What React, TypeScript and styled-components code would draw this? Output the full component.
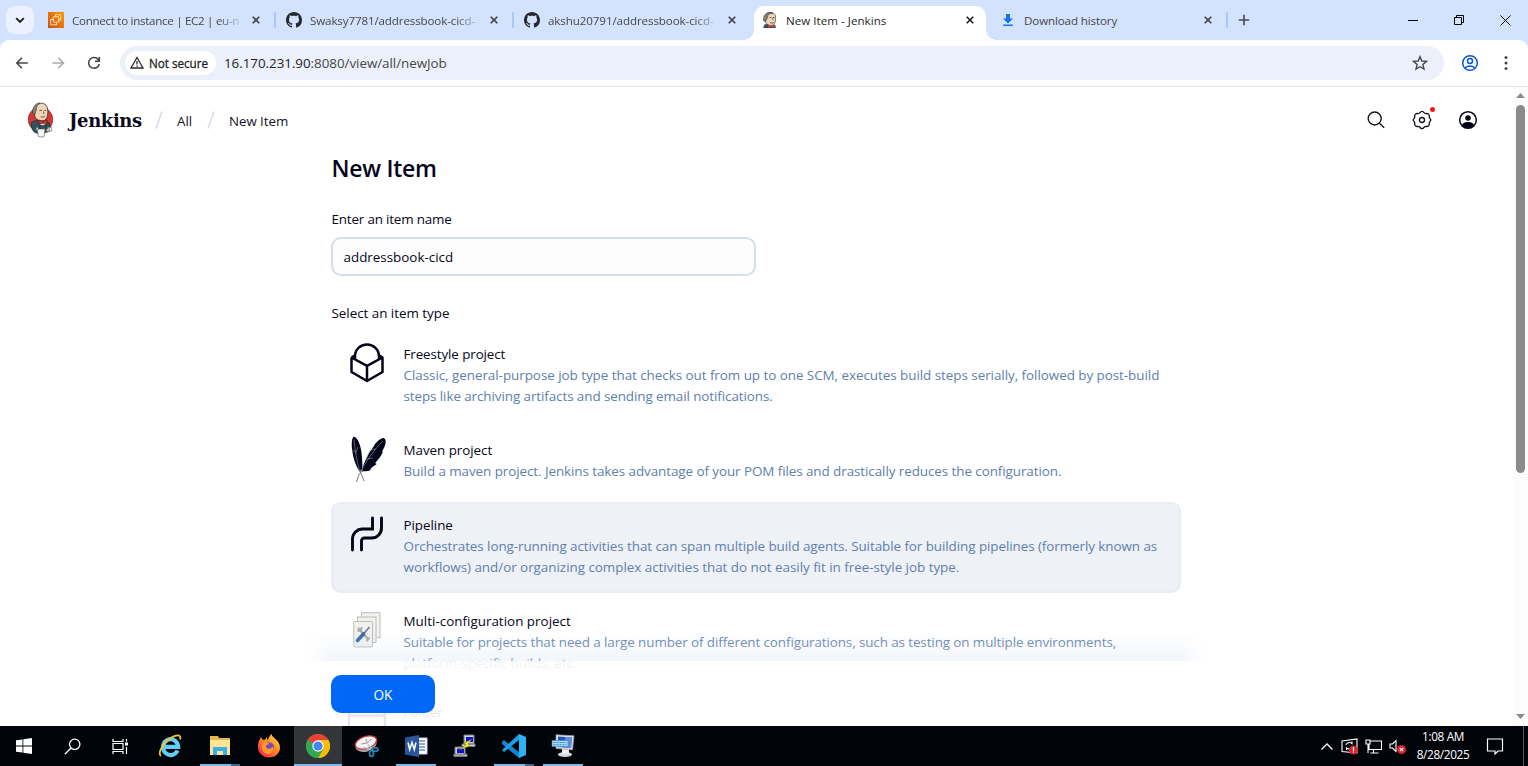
import React from "react";
import styled, { createGlobalStyle, css } from "styled-components";

const Global = createGlobalStyle`
  *{box-sizing:border-box}
  body{margin:0;background:#fff;overflow:hidden;font-family:"Open Sans","Noto Sans",sans-serif}
  svg{display:block;flex:none}
`;
const Screen = styled.div`width:1528px;height:766px;display:flex;flex-direction:column;background:#fff;overflow:hidden;`;

/* ---- tab strip ---- */
const Strip = styled.div`height:40px;background:#d3e2fd;display:flex;align-items:flex-start;padding-left:6px;flex:none;`;
const TabMenu = styled.div`width:28px;height:28px;margin-top:6px;border-radius:9px;background:#ebf1fe;display:grid;place-items:center;`;
const Tab = styled.div<{ $active?: boolean; $w: number; $pad: number; $gap?: number }>`
  width:${p => p.$w}px;height:34px;margin:6px 0 0 ${p => p.$gap ?? 0}px;padding:6px ${p => (p.$active ? 8 : 10)}px 0 ${p => p.$pad}px;display:flex;align-items:flex-start;gap:8px;position:relative;
  ${p => p.$active && css`background:#fff;border-radius:10px 10px 0 0;
    &::before,&::after{content:"";position:absolute;bottom:0;width:10px;height:10px;}
    &::before{left:-10px;background:radial-gradient(circle at 0 0,transparent 9.5px,#fff 10px);}
    &::after{right:-10px;background:radial-gradient(circle at 100% 0,transparent 9.5px,#fff 10px);}`}
`;
const TabTitle = styled.div<{ $fade?: boolean; $ls: number; $dark?: boolean }>`
  flex:1;min-width:0;height:17px;line-height:17px;font-size:11.6px;color:${p => p.$dark ? "#1f1f1f" : "#474747"};white-space:nowrap;letter-spacing:${p => p.$ls}px;
  ${p => p.$fade && css`mask-image:linear-gradient(90deg,#000 87%,rgba(0,0,0,.15));`}
`;
const CloseBox = styled.div`width:16px;height:16px;display:grid;place-items:center;`;
const Divider = styled.div`width:2px;height:16px;margin-top:12px;background:#a8c7fa;border-radius:1px;`;
const NewTab = styled.div`margin:14px 0 0 10px;`;
const WinControls = styled.div`margin-left:auto;display:flex;`;
const WinButton = styled.div`width:46px;height:40px;display:grid;place-items:center;`;

/* ---- toolbar ---- */
const ToolbarBack = styled.div`background:#d3e2fd;height:47px;flex:none;`;
const Toolbar = styled.div`height:47px;background:#fff;border-radius:9px 9px 0 0;border-bottom:1px solid #e0e2e6;display:flex;align-items:center;padding:0 14px 1px;`;
const NavIcons = styled.div`display:flex;gap:20px;margin-right:18px;`;
const Omnibox = styled.div`width:1324px;height:34px;border-radius:17px;background:#ebf0fa;display:flex;align-items:center;padding:0 16px 0 5px;`;
const Chip = styled.div`width:91px;height:24px;border-radius:12px;background:#fff;display:flex;align-items:center;padding-left:5px;gap:5px;font-size:11.7px;font-weight:500;color:#1f1f1f;white-space:nowrap;letter-spacing:-.02px;-webkit-text-stroke:.3px #1f1f1f;`;
const Url = styled.div`margin-left:8px;flex:1;font-size:13.4px;color:#474747;letter-spacing:-.04px;b{font-weight:400;color:#1f1f1f}`;
const ToolEnd = styled.div`display:flex;align-items:center;gap:19px;margin-left:17px;`;

/* ---- page ---- */
const Viewport = styled.div`flex:1;min-height:0;display:flex;position:relative;background:#fff;`;
const Page = styled.div`flex:1;height:639px;overflow:hidden;position:relative;`;
const Header = styled.header`height:65px;margin-bottom:2px;display:flex;align-items:center;padding:0 35px 0 26px;`;
const Brand = styled.div`font:bold 18px/24px "DejaVu Serif","Liberation Serif",serif;color:#0a0a1a;margin-left:15px;width:73px;letter-spacing:-.4px;white-space:nowrap;padding-top:2px;`;
const Crumb = styled.div<{ $w: number }>`font-size:13.3px;color:#14141f;width:${p => p.$w}px;white-space:nowrap;letter-spacing:-.03px;padding-top:2px;`;
const Slash = styled.div<{ $l: number; $r: number }>`margin:0 ${p => p.$r}px 0 ${p => p.$l}px;`;
const HeadIcons = styled.div`margin-left:auto;display:flex;gap:26px;align-items:center;`;
const GearWrap = styled.div`position:relative;`;
const Dot = styled.i`position:absolute;width:5px;height:5px;border-radius:50%;background:#fa1414;right:-3px;top:-3px;`;
const Main = styled.main`width:850px;margin-left:331px;`;
const Title = styled.h1`margin:0;height:28px;font-weight:600;font-size:23px;line-height:28px;color:#06061a;letter-spacing:-.25px;padding-left:.5px;`;
const Label = styled.div<{ $top: number; $ls: number }>`margin-top:${p => p.$top}px;height:20px;padding-left:.5px;font-size:13.4px;line-height:20px;color:#06061a;letter-spacing:${p => p.$ls}px;`;
const Field = styled.div`margin-top:8px;width:425px;height:39px;border:2px solid #d5dfe9;border-radius:10px;background:#fdfdfd;padding:0 10.5px;font-size:13.4px;line-height:36px;color:#06061a;`;
const Items = styled.div`margin-top:8px;display:flex;flex-direction:column;`;
const Item = styled.div<{ $sel?: boolean; $h: number }>`
  height:${p => p.$h}px;margin-bottom:5px;display:flex;padding:12px 0 0 12px;border-radius:10px;
  ${p => p.$sel && css`background:#eef1f6;box-shadow:inset 0 0 0 2px #e9edf4;`}
`;
const IconBox = styled.div<{ $up?: number; $left?: number }>`width:48px;height:48px;margin:${p => -(p.$up ?? 0)}px 12.5px 0 0;padding-left:${p => p.$left ?? 0}px;display:flex;align-items:flex-start;justify-content:center;`;
const ItemText = styled.div`padding-top:1px;`;
const ItemName = styled.div<{ $ls?: number }>`font-size:13.4px;line-height:21px;color:#06061a;letter-spacing:${p => p.$ls ?? -0.04}px;`;
const Line = styled.div<{ $ls: number }>`font-size:13.45px;line-height:21px;color:#6080ad;white-space:nowrap;letter-spacing:${p => p.$ls + 0.06}px;`;
const Footer = styled.div`position:absolute;left:331px;bottom:0;width:850px;height:65px;padding-top:14px;background:rgba(255,255,255,.9);`;
const FooterGlow = styled.div`position:absolute;left:306px;width:900px;bottom:65px;height:30px;background:linear-gradient(rgba(225,232,244,0),rgba(225,232,244,.4));mask-image:linear-gradient(90deg,transparent,#000 25px,#000 875px,transparent);`;
const Ok = styled.button`border:0;width:104px;height:38px;border-radius:10px;background:#0068f8;color:#fff;font:13.6px "Open Sans",sans-serif;display:block;padding:1px 0 0;`;
const Scroll = styled.div`width:15px;background:#fcfcfc;display:flex;flex-direction:column;align-items:center;justify-content:space-between;padding:6px 0 7px;`;
const Thumb = styled.div`width:9px;height:368px;background:#8b8b8b;border-radius:5px;margin:7px 0 auto;`;

/* ---- taskbar ---- */
const Taskbar = styled.div`height:40px;background:#010409;display:flex;flex:none;`;
const TaskButton = styled.div<{ $w: number; $gap?: number; $active?: boolean; $open?: boolean; $stack?: boolean }>`
  width:${p => p.$w}px;height:40px;margin-left:${p => p.$gap ?? 0}px;display:grid;place-items:center;position:relative;background:${p => p.$active ? "#333539" : "transparent"};
  &::after{content:"";display:${p => p.$open || p.$active ? "block" : "none"};position:absolute;bottom:0;left:${p => p.$active ? 0 : 4}px;right:${p => p.$active ? 0 : 4}px;height:2px;
    background:${p => p.$stack ? "linear-gradient(90deg,#76b9ed 31px,#416888 31px)" : "#76b9ed"};}
`;
const Tray = styled.div`margin-left:auto;display:flex;align-items:center;gap:7px;`;
const Clock = styled.div`width:58px;text-align:center;color:#fff;font-size:11.8px;line-height:18px;letter-spacing:-.35px;white-space:nowrap;margin:0 7px 0 1px;padding-bottom:2px;`;
const DesktopEdge = styled.div`width:5px;height:40px;border-left:1px solid #55585c;margin-left:12px;`;

const X = ({ c = "#3c4043" }: { c?: string }) => <svg width="8" height="8" viewBox="0 0 8 8"><path d="M.7.7l6.6 6.6M7.3.7L.7 7.3" stroke={c} strokeWidth="1.6" /></svg>;
const GitHub = () => <svg width="16" height="16" viewBox="0 0 16 16"><path fill="#24292f" d="M8 0C3.58 0 0 3.58 0 8c0 3.54 2.29 6.53 5.47 7.59.4.07.55-.17.55-.38 0-.19-.01-.82-.01-1.49-2.01.37-2.53-.49-2.69-.94-.09-.23-.48-.94-.82-1.13-.28-.15-.68-.52-.01-.53.63-.01 1.08.58 1.23.82.72 1.21 1.87.87 2.33.66.07-.52.28-.87.51-1.07-1.78-.2-3.64-.89-3.64-3.95 0-.87.31-1.59.82-2.15-.08-.2-.36-1.02.08-2.12 0 0 .67-.21 2.2.82.64-.18 1.32-.27 2-.27s1.36.09 2 .27c1.53-1.04 2.2-.82 2.2-.82.44 1.1.16 1.92.08 2.12.51.56.82 1.27.82 2.15 0 3.07-1.87 3.75-3.65 3.95.29.25.54.73.54 1.48 0 1.07-.01 1.93-.01 2.2 0 .21.15.46.55.38A8.01 8.01 0 0 0 16 8c0-4.42-3.58-8-8-8z" /></svg>;
const Ec2 = () => <svg width="16" height="16" viewBox="0 0 16 16"><defs><linearGradient id="ec" x1="0" y1="1" x2="1" y2="0"><stop stopColor="#c8511b" /><stop offset="1" stopColor="#f90" /></linearGradient></defs><path fill="url(#ec)" d="M0 0h16v16H0z" /><g fill="none" stroke="#ffe9d2" strokeWidth=".9"><path d="M7.500 4.500V2.700h5.300V8H11" /><rect x="5.300" y="4.700" width="5.500" height="5.500" rx=".6" /><path d="M5 7.500H2.700v5.300H8.500v-2.500" /></g></svg>;
const JenkinsFace = () => <svg width="16" height="16" viewBox="0 0 16 16"><path fill="#f0d6b7" stroke="#4b4540" strokeWidth=".7" d="M3.500 6C3 2 5.500.5 8.500.5c3.500 0 5.300 2 5.100 6-.1 4-1.100 6.500-3.600 7L5 13 3 9z" /><path fill="#858079" stroke="#3d3935" strokeWidth=".6" d="M1.800 9C.8 6 2.500 1.500 6.500.6c2-.4 3.500 0 4.500.8-3 0-5 .6-5.200 2.600-.2 1.300-.5 2-1.800 5z" /><path fill="#335061" d="M1 16l1.500-3.500L5 12l5 2.500 3-2 1 3.500z" /><path fill="#d33833" d="M6 13l3 1 3-1.500V16l-3-1.200L6 16z" /><path d="M7.500 5.500h2M11 5.500h1.700M8 10.500q2 1.200 4 .2M10.500 6l.5 2" fill="none" stroke="#4b4540" strokeWidth=".8" /></svg>;
const JenkinsLogo = () => (
  <svg width="28" height="36" viewBox="0 0 28 36">
    <ellipse cx="14.500" cy="17.500" rx="12.300" ry="12.500" fill="#d33833" stroke="#7a1f1b" strokeWidth=".6" />
    <path fill="#335061" stroke="#192c38" strokeWidth=".7" d="M5.500 20.500c2-1.500 4-2 6-1.700L16 21l4.500-2.200c2.500 1 3.700 3 3.700 6.700 0 2-1 3.500-2.700 4.500L14 32l-5-1.500c-2-1-3-3.500-3.500-6z" />
    <path fill="#f0d6b7" stroke="#3b332d" strokeWidth=".8" d="M8.500 8.500C9 3.500 11.500 1.200 15 1.200c4.500 0 6.800 3 6.800 8.300 0 4.800-1.300 9-4.800 9.200-4.500.3-7.600-1.700-8.300-5.200z" />
    <path fill="#858079" stroke="#3b332d" strokeWidth=".6" d="M7 11.500C5.800 6.500 8.500 2.200 12.500 1.200c1-.2 1.500 0 1.500.4-2.300 1-3.400 2.400-3.500 4.400 0 1.300.2 2-.8 3l-.9 4C7.900 13 7.300 12.700 7 11.500z" />
    <path fill="none" stroke="#3b332d" strokeWidth=".8" d="M13.500 8.600l2.500-.4M18.300 8.400h2M17.300 9.400l.7 2.500M14.800 14.800q2.200 1 4-.5" />
    <path fill="#fff" stroke="#3b332d" strokeWidth=".4" d="M14 20.500l3 1 3-1.500v7h-6z" />
    <path fill="#d33833" stroke="#5b100d" strokeWidth=".6" d="M13 18l4 1.700 3.800-2 .4 4.300-4.200-1-4 1.500z" />
    <path fill="#335061" stroke="#192c38" strokeWidth=".6" d="M14 23l2 .5 4-1v4l-6 .5z" />
    <path fill="#f5f6f7" stroke="#555" strokeWidth=".6" d="M11.300 27h7.700l-1 7.500q-3 1.200-5.700 0zM21.500 25.500l4-.3.300 3.600-3.600 1z" />
    <path fill="#f0d6b7" stroke="#3b332d" strokeWidth=".4" d="M20.500 27l3-.3v2.300l-3 .8zM10 26l2-1 .5 3-2 .6z" />
  </svg>
);
const SlashIcon = () => <svg width="8" height="18" viewBox="0 0 8 18"><path d="M7 .5L1 17.500" stroke="#d3dbe8" strokeWidth="1.500" /></svg>;
const BoxIcon = () => <svg width="36" height="42" viewBox="0 0 36 42" fill="none" stroke="#05051a" strokeWidth="2.500" strokeLinejoin="round"><path d="M6 16.500V14a12 11.500 0 0 1 24 0v2.500M2.500 15.500l15.500 8.300 15.500-8.300M2.500 15.500v14.500L18 39l15.500-9V15.500l-3.500-2.200M2.500 15.500L6 13.300M18 23.800V39" /></svg>;
const Feathers = () => (
  <svg width="38" height="46" viewBox="0 0 38 46">
    <path fill="#05051a" d="M3.500.8C1.500 3 1.500 9 2.300 15c.8 6.500 3 14 7.200 20.500l3-3C12.300 24 12 15 9.500 8 8 3 5 .2 3.500.8z" /><path fill="#05051a" d="M34.500 2.500c2.500 2 .8 8-2.500 13l1 .3c-2 5-6 9-7.800 11.200l1.500 1c-2.500 2-4.200 2.600-5.700 4.500l-1.500 2.300c-3 .5-5.500.5-7.500.6C12.500 28 19 17 23.500 10.500 27 5 32 .8 34.500 2.500z" />
    <path fill="none" stroke="#9a9aa6" strokeWidth=".6" d="M4 4c1 11 3 22 6 32M33 5C24 14 15 26 11 36M2.500 14l4 3M8 11l-2 5M17 21l3-7 6-1M16 23l7-1" /><path fill="none" stroke="#55555f" strokeWidth=".8" d="M10 35l4 10M12.500 33Q8 39 6.500 46" />
  </svg>
);
const Pipeline = () => <svg width="34" height="38" viewBox="0 -2 34 38" fill="none" stroke="#05051a" strokeWidth="2.900" strokeLinecap="round"><path d="M22.500 2v11H12.500A10 10 0 0 0 2.500 23v11M31.500 2v9.500a10 10 0 0 1-10 10.500H14.500a3 3 0 0 0-3 3v9" /></svg>;
const Matrix = () => (
  <svg width="28" height="38" viewBox="0 -2 28 38"><g fill="#f1f1ef" stroke="#bcbcb8" strokeWidth="1"><rect x="8.500" y=".7" width="18.500" height="25" /><rect x="4.500" y="5" width="18.500" height="25.500" /><rect x=".8" y="9.500" width="18.700" height="25.500" rx="1" /></g>
    <path d="M5 16l11 12M4.500 18.500a3 3 0 0 0 4-3.500M14 29.500a3 3 0 0 1 2.800-3.600" fill="none" stroke="#a7a9aa" strokeWidth="2" /><path d="M16.500 15l-6 7" stroke="#64758a" strokeWidth="1.500" /><path d="M10.500 22l-6 6.500" stroke="#3465a4" strokeWidth="3.600" strokeLinecap="round" /></svg>
);
const FolderIcon = () => <svg width="40" height="34" viewBox="0 0 40 34" fill="none" stroke="#05051a" strokeWidth="2.500"><path d="M2 34V7h36v27M2 14.500h36" /></svg>;

const TrayIcon = ({ kind }: { kind: "update" | "net" | "sound" }) => (
  <svg width="17" height="18" viewBox="0 0 17 18" fill="none" stroke="#fff" strokeWidth="1.100">
    {kind === "update" && <><path d="M1 4l15-2v14L1 14.500zM5 8a3.500 3 0 0 1 6-1.500V4.500M11.500 9.500a3.500 3 0 0 1-6 1.500v2" /><circle cx="12.500" cy="13" r="4.500" fill="#d9232e" stroke="none" /><path d="M12.500 10.200v3.500M12.500 14.500v1.200" strokeWidth="1.300" /></>}
    {kind === "net" && <><path d="M5 4h11.500v8.500H4V7M1 3h4v4H1zM8.500 13v3M5.500 16h8M3 7v9" /></>}
    {kind === "sound" && <><path d="M1 7h2.500L7 3.500v11L3.500 11H1z" /><circle cx="12.500" cy="12.500" r="4.500" fill="#d9232e" stroke="none" /><path d="M10.800 10.800l3.400 3.400M14.200 10.800l-3.400 3.400" /></>}
  </svg>
);

const CloseButton = ({ c }: { c?: string }) => <CloseBox><X c={c} /></CloseBox>;

type Entry = { name: string; icon: React.ReactNode; h: number; up?: number; left?: number; sel?: boolean; nameLs?: number; lines: [string, number][] };
const entries: Entry[] = [
  { name: "Freestyle project", icon: <BoxIcon />, h: 91, up: 1, nameLs: -0.1, lines: [["Classic, general-purpose job type that checks out from up to one SCM, executes build steps serially, followed by post-build", -0.11], ["steps like archiving artifacts and sending email notifications.", -0.15]] },
  { name: "Maven project", icon: <Feathers />, h: 70, up: 3, left: 3, lines: [["Build a maven project. Jenkins takes advantage of your POM files and drastically reduces the configuration.", -0.14]] },
  { name: "Pipeline", icon: <Pipeline />, h: 91, sel: true, lines: [["Orchestrates long-running activities that can span multiple build agents. Suitable for building pipelines (formerly known as", -0.135], ["workflows) and/or organizing complex activities that do not easily fit in free-style job type.", -0.095]] },
  { name: "Multi-configuration project", icon: <Matrix />, h: 86, nameLs: 0.02, lines: [["Suitable for projects that need a large number of different configurations, such as testing on multiple environments,", -0.165], ["platform-specific builds, etc.", -0.16]] },
  { name: "Folder", icon: <FolderIcon />, h: 91, lines: [] },
];

export default function App() {
  return (
    <Screen>
      <Global />
      <Strip>
        <TabMenu><svg width="10" height="7" viewBox="0 0 10 7"><path d="M1.200 1.200L5 5l3.800-3.800" fill="none" stroke="#1f1f1f" strokeWidth="1.900" /></svg></TabMenu>
        <Tab $w={240} $pad={14}><Ec2 /><TabTitle $fade $ls={-0.3}>Connect to instance | EC2 | eu-n</TabTitle><CloseButton /></Tab>
        <Divider />
        <Tab $w={236} $pad={10}><GitHub /><TabTitle $fade $ls={-0.13}>Swaksy7781/addressbook-cicd-</TabTitle><CloseButton /></Tab>
        <Divider />
        <Tab $w={236} $pad={10}><GitHub /><TabTitle $fade $ls={-0.1}>akshu20791/addressbook-cicd-</TabTitle><CloseButton /></Tab>
        <Tab $w={232} $pad={8} $gap={4} $active><JenkinsFace /><TabTitle $dark $ls={0.02}>New Item - Jenkins</TabTitle><CloseButton c="#1f1f1f" /></Tab>
        <Tab $w={240} $pad={14}><svg width="16" height="16" viewBox="0 0 16 16"><path fill="#1a73e8" d="M6 2h4v4.500h3L8 11.500l-5-5h3zM3 12.500h10V14H3z" /></svg><TabTitle $ls={-0.13}>Download history</TabTitle><CloseButton /></Tab>
        <Divider />
        <NewTab><svg width="12" height="12" viewBox="0 0 12 12"><path d="M6 .8v10.400M.8 6h10.400" stroke="#474747" strokeWidth="1.600" /></svg></NewTab>
        <WinControls>
          <WinButton><svg width="10" height="10" viewBox="0 0 10 10"><path d="M0 5.500h10" stroke="#000" /></svg></WinButton>
          <WinButton><svg width="10" height="10" viewBox="0 0 10 10" fill="none" stroke="#000"><path d="M.5 2.500h7v7h-7zM2.500 2V.5h7v7H8" /></svg></WinButton>
          <WinButton><svg width="11" height="11" viewBox="0 0 11 11"><path d="M.5.5l10 10M10.500.5l-10 10" stroke="#000" /></svg></WinButton>
        </WinControls>
      </Strip>
      <ToolbarBack>
        <Toolbar>
          <NavIcons>
            {["#474747", "#a9abae"].map((c, i) => <svg key={c} width="16" height="16" viewBox="0 0 16 16" fill="none" stroke={c} strokeWidth="1.600"><path d={i ? "M2.500 8h11M8.300 2.800L13.500 8l-5.200 5.200" : "M13.800 8H2.800M8 2.800L2.800 8 8 13.200"} /></svg>)}
            <svg width="16" height="16" viewBox="0 0 16 16" fill="none" stroke="#474747" strokeWidth="1.600"><path d="M12.600 5A5.400 5.400 0 1 0 13.300 9M13.300 2v4.200H9" /></svg>
          </NavIcons>
          <Omnibox>
            <Chip><svg width="14" height="13" viewBox="0 0 14 13" fill="none" stroke="#2b2b2b" strokeWidth="1.300"><path d="M7 1.500L13 12H1zM7 5v3.500M7 9.500v1.200" /></svg>Not secure</Chip>
            <Url><b>16.170.231.90</b>:8080/view/all/newJob</Url>
            <svg width="16" height="16" viewBox="0 0 16 16" fill="none" stroke="#474747" strokeWidth="1.400"><path d="M8 1.700l1.800 4.300 4.700.4-3.600 3 1.100 4.700L8 11.700l-4 2.400 1.100-4.700-3.600-3 4.700-.4z" /></svg>
          </Omnibox>
          <ToolEnd>
            <svg width="18" height="18" viewBox="0 0 18 18" fill="none" stroke="#0b57d0" strokeWidth="1.500"><circle cx="9" cy="9" r="7.300" /><circle cx="9" cy="7" r="2.500" /><path d="M3.800 14q5-4 10.400 0" /></svg>
            <svg width="16" height="16" viewBox="0 0 16 16" fill="#474747"><circle cx="8" cy="2.500" r="1.500" /><circle cx="8" cy="8" r="1.500" /><circle cx="8" cy="13.500" r="1.500" /></svg>
          </ToolEnd>
        </Toolbar>
      </ToolbarBack>

      <Viewport>
        <Page>
          <Header>
            <JenkinsLogo /><Brand>Jenkins</Brand>
            <Slash $l={13} $r={14}><SlashIcon /></Slash><Crumb $w={17}>All</Crumb>
            <Slash $l={13} $r={14}><SlashIcon /></Slash><Crumb $w={60}>New Item</Crumb>
            <HeadIcons>
              <svg width="20" height="20" viewBox="0 0 20 20" fill="none" stroke="#14141f" strokeWidth="1.400"><circle cx="8.700" cy="8.500" r="6.500" /><path d="M13.500 13.300l4.700 4.500" /></svg>
              <GearWrap><svg width="20" height="20" viewBox="0 0 24 24" fill="none" stroke="#14141f" strokeWidth="1.600" strokeLinejoin="round"><path d="M9.300 3.300Q12 0 14.700 3.300Q15.500 4.500 17 4.200Q21 3.800 20.800 8Q20.500 9.500 21.500 10.300Q23.500 12 21.500 13.700Q20.500 14.500 20.800 16Q21 20.200 17 19.800Q15.500 19.500 14.700 20.700Q12 24 9.300 20.700Q8.500 19.500 7 19.800Q3 20.200 3.200 16Q3.500 14.500 2.500 13.700Q.5 12 2.500 10.300Q3.500 9.500 3.200 8Q3 3.800 7 4.200Q8.500 4.500 9.300 3.300Z" /><circle cx="12" cy="12" r="3" /></svg><Dot /></GearWrap>
              <svg width="20" height="20" viewBox="0 0 20 20"><circle cx="10" cy="10" r="8.300" fill="none" stroke="#05051a" strokeWidth="1.500" /><circle cx="10" cy="8" r="2.800" fill="#05051a" /><path d="M4 15.500q0-3.500 6-3.500t6 3.500Q10 20.500 4 15.500z" fill="#05051a" /></svg>
            </HeadIcons>
          </Header>
          <Main>
            <Title>New Item</Title>
            <Label $top={27} $ls={-0.17}>Enter an item name</Label>
            <Field>addressbook-cicd</Field>
            <Label $top={27} $ls={-0.02}>Select an item type</Label>
            <Items>
              {entries.map(e => (
                <Item key={e.name} $h={e.h} $sel={e.sel}>
                  <IconBox $up={e.up} $left={e.left}>{e.icon}</IconBox>
                  <ItemText>
                    <ItemName $ls={e.nameLs}>{e.name}</ItemName>
                    {e.lines.map(([text, ls]) => <Line key={text} $ls={ls}>{text}</Line>)}
                  </ItemText>
                </Item>
              ))}
            </Items>
          </Main>
          <FooterGlow />
          <Footer><Ok>OK</Ok></Footer>
        </Page>
        <Scroll><svg width="9" height="5"><path d="M0 5L4.500 0 9 5z" fill="#8b8b8b" /></svg><Thumb /><svg width="9" height="5"><path d="M0 0l4.500 5L9 0z" fill="#8b8b8b" /></svg></Scroll>
      </Viewport>

      <Taskbar>
        <TaskButton $w={48}><svg width="16" height="16" viewBox="0 0 16 16" fill="#fff"><path d="M0 2.300L6.500 1.400v6.100H0zM7.300 1.300L16 0v7.500H7.300zM0 8.400h6.500v6.200L0 13.700zM7.300 8.400H16V16l-8.700-1.300z" /></svg></TaskButton>
        <TaskButton $w={48}><svg width="17" height="17" viewBox="0 0 17 17" fill="none" stroke="#fff" strokeWidth="1.300"><circle cx="10.700" cy="6.300" r="5.200" /><path d="M7 10L.8 16.300" /></svg></TaskButton>
        <TaskButton $w={48}><svg width="17" height="17" viewBox="0 0 17 17" fill="none" stroke="#fff" strokeWidth="1.200"><path d="M1 1v2.500h10V1M1 16v-2.500h10V16M1 5.500h10v6H1zM14.500 1v2.500M14.500 9v7" /><path d="M13 4.500h3v3h-3z" fill="#fff" stroke="none" /></svg></TaskButton>
        <TaskButton $w={52}><svg width="24" height="24" viewBox="0 0 24 24" fill="none"><path d="M19.500 16.500A7.600 7.900 0 1 1 20.200 12.800H7" stroke="#62cdf5" strokeWidth="4.200" /><path d="M3 22C-1 20 5 9 12 4.500 18 .5 24 0 22 5.500" stroke="#f2c431" strokeWidth="1.800" /></svg></TaskButton>
        <TaskButton $w={48} $open $stack><svg width="22" height="20" viewBox="0 0 22 20"><path fill="#e8b64c" d="M1 0h8l1 2h11v5H1z" /><path fill="#ffe594" d="M1 4h20v15H1z" /><path fill="#36aee9" d="M4 11h14v8h-4v-4H8v4H4z" /></svg></TaskButton>
        <TaskButton $w={50}><svg width="24" height="24" viewBox="0 0 24 24"><defs><linearGradient id="ff" x1="1" y1="0" x2=".2" y2="1"><stop stopColor="#ffed4a" /><stop offset=".45" stopColor="#ff9420" /><stop offset="1" stopColor="#f52257" /></linearGradient></defs><path fill="url(#ff)" d="M3 5l1-2 2 3 2-.5L10 3v3c2-1 2-4 4.500-6C15 4 23 6 23 13.500 23 19.500 18 23.500 12 23.500S1 19 1 13c0-3 .5-6 2-8z" /><circle cx="12" cy="13.500" r="5.300" fill="#7542c9" /><path fill="#ff9a22" d="M5 9c4-2 6 0 8 1-2 .5-4 .5-4 3 1 3 6 2 7-1 2 4-1 8-5 8-5 0-7-5-6-11z" /></svg></TaskButton>
        <TaskButton $w={48} $active><svg width="24" height="24" viewBox="0 0 24 24"><circle cx="12" cy="12" r="12" fill="#33a852" /><path fill="#ea4335" d="M12 12L1.600 6A12 12 0 0 1 22.400 6H12z" /><path fill="#fbbc05" d="M12 24a12 12 0 0 0 10.400-18H12l5.200 9z" /><path fill="#33a852" d="M1.600 6l5.200 9L12 18l4.500-1.500L12 24A12 12 0 0 1 1.600 6z" /><circle cx="12" cy="12" r="5.700" fill="#fff" /><circle cx="12" cy="12" r="4.600" fill="#4285f4" /></svg></TaskButton>
        <TaskButton $w={50}><svg width="26" height="24" viewBox="0 0 26 24"><ellipse cx="12" cy="10.500" rx="11" ry="7" fill="#a5a5a5" transform="rotate(-18 12 10.500)" /><ellipse cx="12" cy="8.500" rx="11" ry="6" fill="#f5f5f5" stroke="#d0323a" strokeWidth="1.200" transform="rotate(-18 12 8.500)" /><path d="M7 10l6-1-1-4M13 9l5-4" stroke="#999" fill="none" /><path d="M12 8l7 8M9 13l7 2" stroke="#c5c9cc" strokeWidth="1.300" /><g fill="none" stroke="#2b86b8" strokeWidth="1.700"><ellipse cx="21" cy="15.500" rx="3" ry="1.900" /><ellipse cx="17.500" cy="19.500" rx="2" ry="3" /></g></svg></TaskButton>
        <TaskButton $w={48} $open><svg width="23" height="22" viewBox="0 0 23 22"><path fill="#fff" stroke="#cbd5e6" d="M12 3h10v16H12z" /><path d="M14 6h6M14 9h6M14 12h6M14 15h6" stroke="#2b579a" strokeWidth="1.200" /><path fill="#2b579a" d="M0 2.500L14 0v22L0 19.500z" /><path d="M3 7.500l1.700 7 2.300-7 2.300 7 1.700-7" fill="none" stroke="#fff" strokeWidth="1.500" /></svg></TaskButton>
        <TaskButton $w={50}><svg width="24" height="24" viewBox="0 0 24 24"><g stroke="#777" fill="#d5d5d5"><path d="M11 1h10v9H11zM2 13h10v8H2zM9 10h13v2.500H9zM1 20h13v2.500H1z" /></g><path fill="#0612d8" d="M13 3h7v5h-7zM4 14.500h7v4.500H4z" /><path fill="#f6ee22" stroke="#5c5714" strokeWidth=".4" d="M19 5l-8 4 2 2-7 5 11-4-2-2z" /></svg></TaskButton>
        <TaskButton $w={48} $open $stack><svg width="24" height="24" viewBox="0 0 24 24"><path fill="#1582ce" d="M0 8l2-2 16 13-1 5L0 10z" /><path fill="#209ee3" d="M17 0v6L2 18l-2-2z" /><path fill="#2fb2f5" d="M17 0l7 3v18l-7 3z" /></svg></TaskButton>
        <TaskButton $w={48} $gap={1} $open><svg width="24" height="24" viewBox="0 0 24 24"><ellipse cx="14" cy="20.500" rx="7" ry="2.600" fill="#d6d8da" /><path fill="#eee" d="M11 15h7v5h-7z" /><path fill="#dfe1e4" stroke="#9aa0a6" strokeWidth=".7" d="M5 .8l18 1-1.500 14L5 14.500z" /><path fill="#2352bd" d="M7 2.500l14 1-1 10.500-13-1z" /><path fill="#5d8fe0" d="M14 3l7 .5L20 14l-6-1z" /><path fill="#a9dcf7" stroke="#3f86bf" strokeWidth=".6" d="M1 6.500h16v6H1z" /><path d="M2.500 8.500h13M2.500 10.700h13" stroke="#2f86c9" strokeDasharray="2 1" /></svg></TaskButton>
        <Tray>
          <svg width="14" height="9" viewBox="0 0 14 9"><path d="M1.500 7.500L7 2l5.500 5.500" fill="none" stroke="#fff" strokeWidth="1.300" /></svg>
          <TrayIcon kind="update" /><TrayIcon kind="net" /><TrayIcon kind="sound" />
          <Clock>1:08 AM<br />8/28/2025</Clock>
          <svg width="18" height="18" viewBox="0 0 18 18"><path d="M1.500 2h15v12H12l-3 3v-3H1.500z" fill="none" stroke="#fff" strokeWidth="1.200" /></svg>
          <DesktopEdge />
        </Tray>
      </Taskbar>
    </Screen>
  );
}
